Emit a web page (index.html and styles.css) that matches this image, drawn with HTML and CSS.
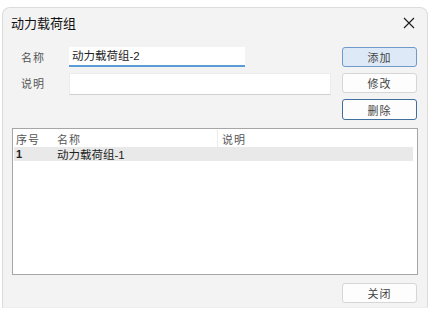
FILE: index.html
```html
<!DOCTYPE html>
<html lang="zh">
<head>
<meta charset="utf-8">
<title>动力载荷组</title>
<link rel="stylesheet" href="styles.css">
</head>
<body>
<div class="window">
  <div class="titlebar">
    <span class="title">动力载荷组</span>
    <svg class="close" width="12" height="12" viewBox="0 0 12 12"><path d="M1 1 L11 11 M11 1 L1 11" stroke="#1a1a1a" stroke-width="1.1" fill="none"/></svg>
  </div>
  <div class="content">
    <div class="form">
      <div class="fields">
        <div class="row">
          <span class="label">名称</span>
          <div class="input focused">动力载荷组-2</div>
        </div>
        <div class="row">
          <span class="label">说明</span>
          <div class="input wide"></div>
        </div>
      </div>
      <div class="buttons">
        <div class="btn primary">添加</div>
        <div class="btn">修改</div>
        <div class="btn focus">删除</div>
      </div>
    </div>
    <div class="list">
      <div class="lrow head">
        <span class="c1">序号</span><span class="c2">名称</span><span class="c3">说明</span>
      </div>
      <div class="lrow sel">
        <span class="c1 num">1</span><span class="c2">动力载荷组-1</span><span class="c3"></span>
      </div>
    </div>
    <div class="footer">
      <div class="btn">关闭</div>
    </div>
  </div>
</div>
</body>
</html>
```
FILE: styles.css
```css
html, body {
  margin: 0;
  padding: 0;
  background: #ffffff;
}
body {
  font-family: "Liberation Sans", "Noto Sans CJK SC", sans-serif;
  color: #333;
}
.window {
  margin: 7px 0 0 2px;
  width: 426px;
  height: 301px;
  box-sizing: border-box;
  background: #f3f3f3;
  border: 1px solid #dcdcdc;
  border-bottom-color: #eeeeee;
  border-radius: 8px 8px 0 0;
  display: flex;
  flex-direction: column;
}
.titlebar {
  height: 29px;
  display: flex;
  align-items: center;
  padding: 0 11px 0 8px;
}
.title {
  font-family: "Noto Sans CJK SC", sans-serif;
  font-size: 13px;
  color: #111;
  flex: 1;
}
.close {
  display: block;
  margin-right: 1px;
}
.content {
  padding: 10px 9px 0 9px;
  display: flex;
  flex-direction: column;
  flex: 1;
}
.form {
  display: flex;
  align-items: flex-start;
}
.fields {
  flex: 1;
  display: flex;
  flex-direction: column;
  gap: 6px;
}
.row {
  display: flex;
  align-items: flex-start;
}
.label {
  width: 57px;
  padding-left: 9px;
  box-sizing: border-box;
  font-family: "Noto Sans CJK SC", sans-serif;
  font-size: 11px;
  letter-spacing: 1px;
  color: #555;
  line-height: 18px;
  padding-top: 1px;
}
.input {
  background: #fff;
  box-sizing: border-box;
  font-size: 11.5px;
  color: #222;
  padding: 1px 3px;
  line-height: 16px;
}
.input.focused {
  width: 176px;
  height: 20px;
  border-bottom: 2px solid #5a9bd8;
}
.input.wide {
  width: 262px;
  height: 22px;
  border: 1px solid #ececec;
  border-bottom-color: #d0d0d0;
}
.buttons {
  display: flex;
  flex-direction: column;
  gap: 6px;
  width: 75px;
  margin-right: 1px;
}
.btn {
  height: 20px;
  box-sizing: border-box;
  border: 1px solid #d6d6d6;
  border-radius: 3px;
  background: #fdfdfd;
  font-family: "Noto Sans CJK SC", sans-serif;
  font-size: 11px;
  letter-spacing: 1px;
  color: #444;
  display: flex;
  align-items: center;
  justify-content: center;
}
.btn.primary {
  background: #dde9f6;
  border-color: #6f9acb;
}
.btn.focus {
  border-color: #3f6f9f;
  height: 21px;
}
.list {
  margin-top: 8px;
  height: 147px;
  box-sizing: border-box;
  border: 1px solid #a6a6a6;
  background: #fff;
  padding: 1px 4px 0 1px;
}
.lrow {
  display: flex;
  font-size: 11.5px;
  align-items: center;
}
.lrow.head {
  height: 17px;
  color: #555;
  font-family: "Noto Sans CJK SC", sans-serif;
  font-size: 11px;
  letter-spacing: 1px;
}
.lrow.sel {
  height: 14px;
  background: #e9e9e9;
  color: #222;
}
.c1 {
  width: 41px;
  padding-left: 2px;
  box-sizing: border-box;
}
.c2 {
  width: 162px;
  padding-left: 2px;
  box-sizing: border-box;
  height: 100%;
  display: flex;
  align-items: center;
}
.c3 {
  flex: 1;
  padding-left: 4px;
  align-self: stretch;
  display: flex;
  align-items: center;
}
.head .c3 {
  border-left: 1px solid #ececec;
}
.num {
  font-weight: bold;
  font-size: 11px;
}
.footer {
  margin-top: 8px;
  display: flex;
  justify-content: flex-end;
  padding-right: 1px;
}
.footer .btn {
  width: 75px;
}
```
